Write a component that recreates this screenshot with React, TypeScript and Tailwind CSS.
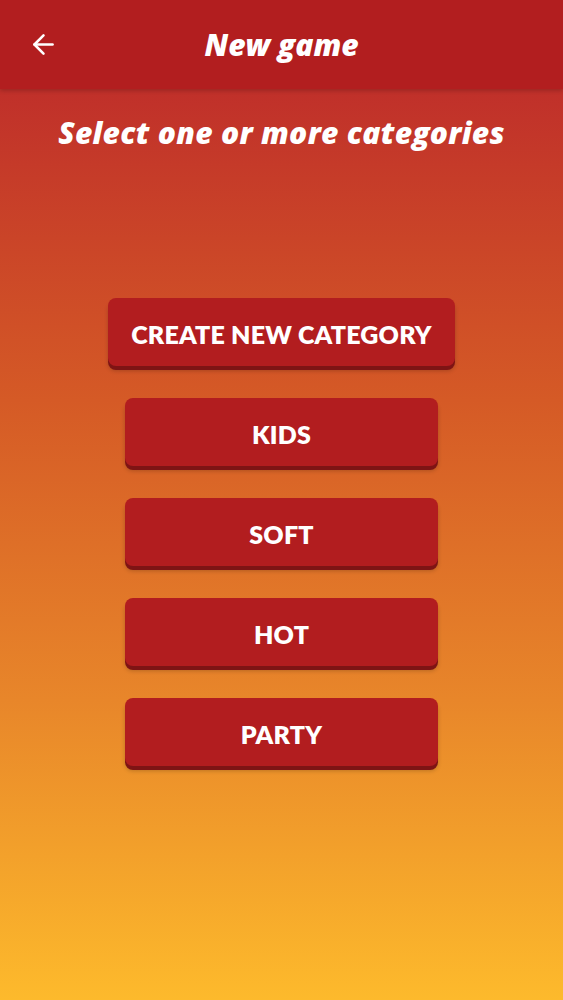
import { ArrowLeft } from "lucide-react";

const categories = ["KIDS", "SOFT", "HOT", "PARTY"];

function CategoryButton({ label, wide }: { label: string; wide?: boolean }) {
  return (
    <button
      className={`${
        wide ? "w-[347px]" : "w-[313px]"
      } h-[68px] pt-[5px] rounded-[8px] bg-[#b21d1f] text-white text-[25px] font-extrabold tracking-[0.2px] shadow-[0_4px_0_#7e1414,0_5px_4px_rgba(0,0,0,0.2)]`}
    >
      {label}
    </button>
  );
}

export default function App() {
  return (
    <div
      className="w-[563px] h-[1000px] flex flex-col bg-[linear-gradient(180deg,#c0302a_9%,#d55a26_40%,#e8862a_70%,#fdba2c_100%)] text-white"
      style={{ fontFamily: "Lato, 'Open Sans', sans-serif" }}
    >
      {/* Header */}
      <header className="h-[89px] shrink-0 bg-[#b21e1f] flex items-center relative shadow-[0_2px_4px_rgba(0,0,0,0.18)]">
        <button className="absolute left-[28px] top-[29px] text-white">
          <ArrowLeft className="w-[31px] h-[31px]" strokeWidth={2} />
        </button>
        <h1 className="w-full text-center text-[30px] leading-[40px] font-extrabold italic font-['Open_Sans',sans-serif]">
          New game
        </h1>
      </header>

      <h2 className="mt-[24px] text-center text-[30px] leading-[40px] font-extrabold italic font-['Open_Sans',sans-serif] tracking-[0.3px]">
        Select one or more categories
      </h2>

      <div className="mt-[145px] flex flex-col items-center gap-[32px]">
        <CategoryButton label="CREATE NEW CATEGORY" wide />
        {categories.map((c) => (
          <CategoryButton key={c} label={c} />
        ))}
      </div>
    </div>
  );
}
